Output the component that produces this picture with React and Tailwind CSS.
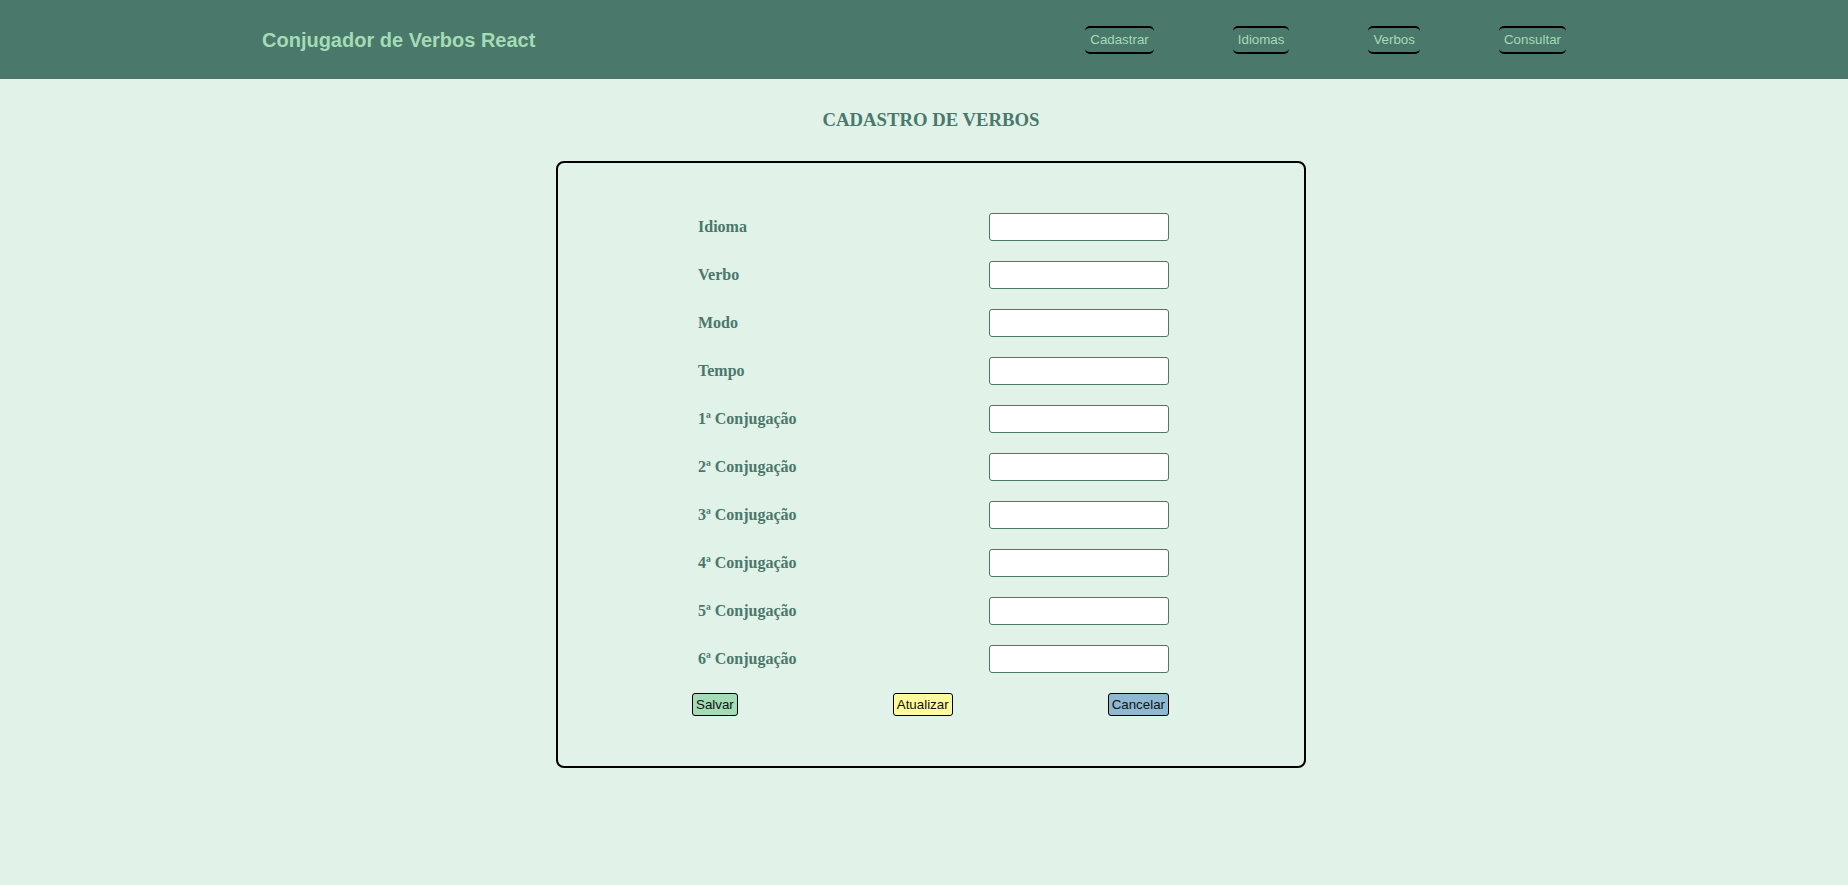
import React from 'react';

const campos = [
  'Idioma',
  'Verbo',
  'Modo',
  'Tempo',
  '1ª Conjugação',
  '2ª Conjugação',
  '3ª Conjugação',
  '4ª Conjugação',
  '5ª Conjugação',
  '6ª Conjugação',
];

const menu = ['Cadastrar', 'Idiomas', 'Verbos', 'Consultar'];

const App = () => {
  return (
    <div className="min-h-screen bg-[#e1f2e8]">
      {/* Header */}
      <header className="h-[79px] bg-[#4a786b] flex items-center pl-[262px] pr-[282px] font-['Liberation_Sans',Arial,sans-serif]">
        <h1 className="text-[20px] font-bold text-[#a3dcb5] leading-none">Conjugador de Verbos React</h1>
        <nav className="ml-auto flex items-center gap-[79px]">
          {menu.map((item) => (
            <button
              key={item}
              className="h-[28px] px-[5px] flex items-center text-[13.33px] text-[#a3dcb5] border-y-2 border-black rounded-[5px] bg-transparent"
            >
              {item}
            </button>
          ))}
        </nav>
      </header>

      {/* Main Content */}
      <main className="flex flex-col items-center pl-[14px] pt-[30px]">
        <h3 className="font-['Liberation_Serif','Times_New_Roman',serif] font-bold text-[18.72px] leading-[22px] text-[#4a786b] mb-[30px]">
          CADASTRO DE VERBOS
        </h3>

        <div className="w-[750px] border-2 border-black rounded-[8px] pt-[50px] pb-[50px]">
          <form className="ml-[134px] w-[477px] flex flex-col gap-[20px]">
            {campos.map((campo) => (
              <div key={campo} className="h-[28px] flex items-center justify-between">
                <label className="pl-[6px] font-['Liberation_Serif','Times_New_Roman',serif] font-bold text-[16px] text-[#4a786b]">
                  {campo}
                </label>
                <input
                  type="text"
                  className="w-[180px] h-[28px] bg-white border border-[#4a786b] rounded-[3px] outline-none"
                />
              </div>
            ))}
            <div className="flex justify-between font-['Liberation_Sans',Arial,sans-serif]">
              <button type="button" className="px-[3px] py-[3px] leading-[15px] text-[13.33px] text-[#111] bg-[#a3dcb5] border border-black rounded-[3px]">
                Salvar
              </button>
              <button type="button" className="px-[3px] py-[3px] leading-[15px] text-[13.33px] text-[#111] bg-[#fffb9c] border border-black rounded-[3px]">
                Atualizar
              </button>
              <button type="button" className="px-[3px] py-[3px] leading-[15px] text-[13.33px] text-[#111] bg-[#8fb9d2] border border-black rounded-[3px]">
                Cancelar
              </button>
            </div>
          </form>
        </div>
      </main>
    </div>
  );
};

export default App;
